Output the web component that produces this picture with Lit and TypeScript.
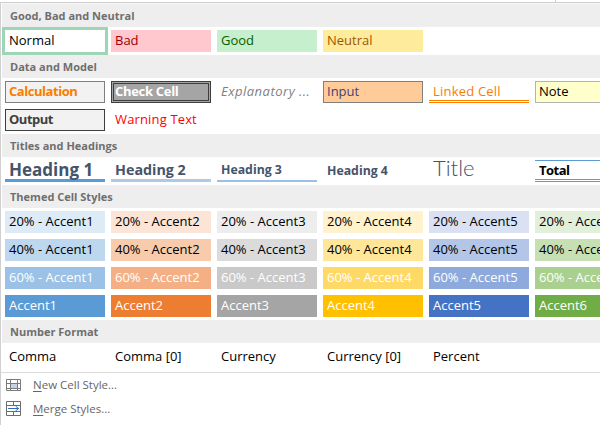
import { LitElement, html, css, svg } from "lit";
import { customElement } from "lit/decorators.js";

type Cell = [string, string];

const good: Cell[] = [["Normal", "normal"], ["Bad", "bad"], ["Good", "good"], ["Neutral", "neutral"]];
const data: Cell[] = [
  ["Calculation", "calc"], ["Check Cell", "check"], ["Explanatory ...", "expl"], ["Input", "input"], ["Linked Cell", "linked"], ["Note", "note"],
  ["Output", "output"], ["Warning Text", "warn"],
];
const titles: Cell[] = [["Heading 1", "h1"], ["Heading 2", "h2"], ["Heading 3", "h3"], ["Heading 4", "h4"], ["Title", "title"], ["Total", "total"]];
const accents = [1, 2, 3, 4, 5, 6];
const themed: Cell[] = [
  ...accents.map((a): Cell => [`20% - Accent${a}`, `a${a}-20`]),
  ...accents.map((a): Cell => [`40% - Accent${a}`, `a${a}-40`]),
  ...accents.map((a): Cell => [`60% - Accent${a}`, `a${a}-60 light`]),
  ...accents.map((a): Cell => [`Accent${a}`, `a${a} light`]),
];
const numbers: Cell[] = [["Comma", ""], ["Comma [0]", ""], ["Currency", ""], ["Currency [0]", ""], ["Percent", ""]];

@customElement("app-root")
export class AppRoot extends LitElement {
  static styles = css`
    :host {
      display: block;
      width: 600px;
      height: 425px;
      overflow: hidden;
      background: #fff;
      font-family: "Open Sans", "Noto Sans", sans-serif;
      font-size: 13px;
      color: #000;
    }
    .tick { height: 2px; width: 1px; margin-left: 555px; background: #d0d0d0; }
    .panel { border-top: 1px solid #cfcfcf; border-left: 1px solid #d0d0d0; height: 422px; width: 640px; }
    .head {
      height: 23px;
      box-sizing: border-box;
      background: #eee;
      margin-left: 1px;
      padding-left: 8px;
      font-size: 11px;
      font-weight: 700;
      line-height: 23px;
      color: #6f6f6f;
    }
    .head.first { height: 24px; border-top: 1px solid #f7f7f7; }
    .grid {
      display: grid;
      grid-template-columns: repeat(6, 100px);
      grid-auto-rows: 22px;
      gap: 6px;
      padding: 3px 0 3px 4px;
    }
    .cell {
      box-sizing: border-box;
      padding: 0 4px 2px;
      line-height: 20px;
      white-space: nowrap;
    }
    .normal { box-shadow: 0 0 0 3px #9fd5b7; }
    .bad { background: #ffc7ce; color: #9c0006; }
    .good { background: #c6efce; color: #006100; }
    .neutral { background: #ffeb9c; color: #9c5700; }
    .calc { background: #f2f2f2; border: 1px solid #7f7f7f; color: #fa7d00; font-weight: 700; padding: 0 3px; line-height: 18px; letter-spacing: -0.45px; }
    .check { background: #a5a5a5; border: 3px double #3f3f3f; color: #fff; font-weight: 700; padding: 0 1px; line-height: 14px; letter-spacing: -0.3px; }
    .expl { color: #7f7f7f; font-style: italic; letter-spacing: 0.5px; }
    .input { background: #ffcc99; border: 1px solid #7f7f7f; color: #3f3f76; padding: 0 3px; line-height: 18px; }
    .linked { color: #fa7d00; border-bottom: 3px double #ff8001; line-height: 20px; padding: 0 4px; letter-spacing: 0.2px; }
    .note { background: #ffffcc; border: 1px solid #b2b2b2; padding: 0 3px; line-height: 18px; }
    .output { background: #f2f2f2; border: 1px solid #3f3f3f; color: #3f3f3f; font-weight: 700; padding: 0 3px; line-height: 18px; letter-spacing: -0.5px; }
    .warn { color: #ff0000; letter-spacing: 0.15px; }
    .h1, .h2, .h3, .h4, .title { color: #44546a; }
    .h1 { font-size: 17px; font-weight: 700; border-bottom: 3px solid #5b9bd5; padding-bottom: 0; line-height: 19px; }
    .h2 { font-size: 14.3px; font-weight: 700; border-bottom: 3px solid #adcbe8; padding-bottom: 0; line-height: 19px; }
    .h3 { font-size: 12.3px; font-weight: 700; border-bottom: 2px solid #9cc0e5; padding-bottom: 0; line-height: 20px; }
    .h4 { font-size: 12.3px; font-weight: 700; padding-bottom: 0; line-height: 22px; }
    .title { font-size: 22px; font-weight: 300; font-family: "Lato", "Open Sans", sans-serif; padding-bottom: 0; line-height: 15px; }
    .total { font-weight: 700; border-top: 1px solid #5b9bd5; border-bottom: 3px double #5b9bd5; padding-bottom: 0; line-height: 18px; letter-spacing: -0.5px; }
    .a1-20 { background: #ddebf7; } .a2-20 { background: #fce4d6; } .a3-20 { background: #ededed; }
    .a4-20 { background: #fff2cc; } .a5-20 { background: #d9e1f2; } .a6-20 { background: #e2efda; }
    .a1-40 { background: #bdd7ee; } .a2-40 { background: #f8cbad; } .a3-40 { background: #dbdbdb; }
    .a4-40 { background: #ffe699; } .a5-40 { background: #b4c6e7; } .a6-40 { background: #c6e0b4; }
    .a1-60 { background: #9bc2e6; } .a2-60 { background: #f4b084; } .a3-60 { background: #c9c9c9; }
    .a4-60 { background: #ffd966; } .a5-60 { background: #8ea9db; } .a6-60 { background: #a9d08e; }
    .a1 { background: #5b9bd5; } .a2 { background: #ed7d31; } .a3 { background: #a5a5a5; }
    .a4 { background: #ffc000; } .a5 { background: #4472c4; } .a6 { background: #70ad47; }
    .light { color: #fff; }
    .divider { height: 1px; background: #dcdcdc; margin-top: 1px; }
    .item {
      display: flex;
      align-items: center;
      height: 24px;
      padding-left: 5px;
      font-size: 11.5px;
      color: #666;
    }
    .item svg { width: 16px; height: 16px; margin-right: 11px; flex: none; }
    .item span { padding-bottom: 2px; }
    .item u { text-underline-offset: 2px; }
  `;

  private grid(cells: Cell[]) {
    return html`<div class="grid">${cells.map(([t, c]) => html`<div class="cell ${c}">${t}</div>`)}</div>`;
  }

  render() {
    return html`
      <div class="tick"></div>
      <div class="panel">
        <div class="head first">Good, Bad and Neutral</div>
        ${this.grid(good)}
        <div class="head">Data and Model</div>
        ${this.grid(data)}
        <div class="head">Titles and Headings</div>
        ${this.grid(titles)}
        <div class="head">Themed Cell Styles</div>
        ${this.grid(themed)}
        <div class="head">Number Format</div>
        ${this.grid(numbers)}
        <div class="divider"></div>
        <div>
          <div class="item">
            <svg viewBox="0 0 16 16">${svg`
              <rect x="4" y="6" width="7" height="6" fill="#c4d3e8"/>
              <path d="M0.5 2.5h14v11h-14z M0.5 6.5h14 M0.5 11.5h14 M4.5 2.5v11 M11.5 2.5v11" fill="none" stroke="#7a7a7a"/>`}
            </svg>
            <span><u>N</u>ew Cell Style...</span>
          </div>
          <div class="item">
            <svg viewBox="0 0 16 16">${svg`
              <path d="M0.5 0.5h14v14h-14z M0.5 4.5h14 M0.5 10.5h14 M7.5 0.5v4 M7.5 10.5v4" fill="none" stroke="#6d6d6d"/>
              <path d="M2 7.5h10.5 M9.5 5l3 2.5-3 2.5" fill="none" stroke="#2f6db5"/>`}
            </svg>
            <span><u>M</u>erge Styles...</span>
          </div>
        </div>
      </div>
    `;
  }
}
